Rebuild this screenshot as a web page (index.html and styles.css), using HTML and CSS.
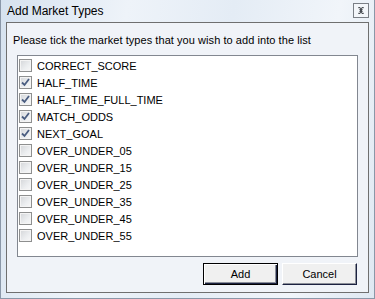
FILE: index.html
```html
<!DOCTYPE html>
<html lang="en">
<head>
    <meta charset="UTF-8">
    <meta name="viewport" content="width=device-width, initial-scale=1.0">
    <title>Add Market Types</title>
    <link rel="stylesheet" href="styles.css">
</head>
<body>
    <div class="window">
        <div class="titlebar">
            <span class="title">Add Market Types</span>
            <span class="close">
                <svg width="16" height="15" viewBox="0 0 16 15">
                    <rect x="0.5" y="0.5" width="15" height="14" fill="#f3f6fa" stroke="#7a7f86"/>
                    <path d="M5 4h2l1 1.5 1-1.5h2l-2 3.5 2 3.5h-2l-1-1.5-1 1.5h-2l2-3.5z" fill="#4b4f55"/>
                    <path d="M6 5.5h1M9 5.5h1M6 9.5h1M9 9.5h1" stroke="#c9ccd0"/>
                </svg>
            </span>
        </div>

        <div class="client">
            <p class="prompt">Please tick the market types that you wish to add into the list</p>

            <ul class="checklist">
                <li><span class="box"></span>CORRECT_SCORE</li>
                <li><span class="box checked"></span>HALF_TIME</li>
                <li><span class="box checked"></span>HALF_TIME_FULL_TIME</li>
                <li><span class="box checked"></span>MATCH_ODDS</li>
                <li><span class="box checked"></span>NEXT_GOAL</li>
                <li><span class="box"></span>OVER_UNDER_05</li>
                <li><span class="box"></span>OVER_UNDER_15</li>
                <li><span class="box"></span>OVER_UNDER_25</li>
                <li><span class="box"></span>OVER_UNDER_35</li>
                <li><span class="box"></span>OVER_UNDER_45</li>
                <li><span class="box"></span>OVER_UNDER_55</li>
            </ul>

            <div class="buttons">
                <button class="btn default">Add</button>
                <button class="btn">Cancel</button>
            </div>
        </div>
    </div>
</body>
</html>
```

FILE: styles.css
```css
body {
    margin: 0;
    padding: 0;
    font-family: "Liberation Sans", Arial, sans-serif;
    background: #dfe8f2;
}
.window {
    width: 375px;
    height: 299px;
    box-sizing: border-box;
    padding: 0 5px 5px 5px;
    display: flex;
    flex-direction: column;
    background: linear-gradient(100deg, #d6e2ef 0%, #eef3f9 30%, #e4ecf5 55%, #f1f5fa 80%, #dfe8f2 100%);
    border-left: 1px solid #8a97a8;
    border-right: 1px solid #8a97a8;
    border-bottom: 1px solid #8a97a8;
}
.titlebar {
    height: 22px;
    display: flex;
    align-items: center;
    justify-content: space-between;
    padding: 0 0 0 1px;
}
.title {
    font-size: 12px;
    color: #000;
}
.close {
    display: flex;
    margin-top: -2px;
}
.client {
    flex: 1;
    border: 1px solid #6f6f6f;
    background: #f0f3f8;
    display: flex;
    flex-direction: column;
}
.prompt {
    margin: 11px 0 0 6px;
    font-size: 11px;
    line-height: 13px;
    letter-spacing: 0.06px;
    color: #000;
}
.checklist {
    list-style: none;
    margin: 8px 10px 0 10px;
    padding: 1px 0 0 0;
    height: 199px;
    background: #fff;
    border: 1px solid #828790;
}
.checklist li {
    height: 17px;
    display: flex;
    align-items: center;
    font-size: 11px;
    color: #000;
    padding-left: 1px;
}
.box {
    width: 11px;
    height: 11px;
    margin-right: 5px;
    border: 1px solid #8e8f8f;
    background: linear-gradient(135deg, #d3d5d8 0%, #eceef0 60%, #f8f8f8 100%);
    box-shadow: inset 0 0 0 1px #f4f4f4;
    flex-shrink: 0;
}
.box.checked {
    background-color: #eef0f2;
    background-image: url("data:image/svg+xml,%3Csvg xmlns='http://www.w3.org/2000/svg' width='11' height='11'%3E%3Cpath d='M2 5.5l2.5 2.5 4.5-6' fill='none' stroke='%234a5d80' stroke-width='1.8'/%3E%3C/svg%3E"), linear-gradient(135deg, #d3d5d8 0%, #eceef0 60%, #f8f8f8 100%);
}
.buttons {
    display: flex;
    justify-content: flex-end;
    gap: 4px;
    margin: 6px 11px 0 0;
}
.btn {
    width: 75px;
    height: 22px;
    font-family: "Liberation Sans", Arial, sans-serif;
    font-size: 11px;
    color: #000;
    background: #f0f0f0;
    border: 1px solid;
    border-color: #fff #1b2140 #1b2140 #fff;
    box-shadow: inset -1px -1px 0 #8b8f99;
    padding: 0;
}
.btn.default {
    border: 1px solid #000;
    box-shadow: inset 1px 1px 0 #fff, inset -1px -1px 0 #1b2140, inset -2px -2px 0 #8b8f99;
}
```
